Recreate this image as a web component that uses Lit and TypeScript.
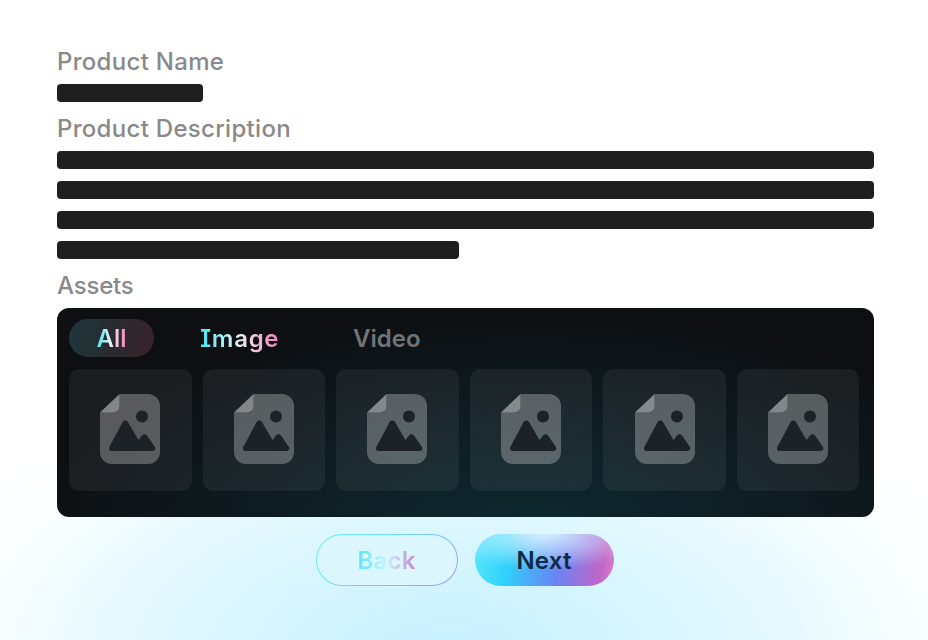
import { LitElement, html, css, svg } from "lit";
import { customElement } from "lit/decorators.js";

const icon = svg`<svg class="ico" viewBox="0 0 60 70" width="60" height="70">
  <path d="M19.500 0H48a12 12 0 0 1 12 12V58a12 12 0 0 1-12 12H12A12 12 0 0 1 0 58V18.500H14a5.500 5.500 0 0 0 5.500-5.500Z" fill="rgba(255,255,255,0.27)"/>
  <path d="M19.500 0V12.500a6 6 0 0 1-6 6H0Z" fill="rgba(255,255,255,0.46)"/>
  <circle cx="42" cy="22.500" r="6" fill="#1c2225"/>
  <path d="M22.800 27.800a3 3 0 0 1 5 0L38.500 46l3.500-4.500a3.200 3.200 0 0 1 5 0l7.800 11.300a2.600 2.600 0 0 1-2.100 4.200H11.500a2.600 2.600 0 0 1-2.200-4Z" fill="#1c2225"/>
</svg>`;

@customElement("app-root")
export class AppRoot extends LitElement {
  static styles = css`
    :host {
      display: block;
      width: 928px;
      height: 640px;
      overflow: hidden;
      font-family: "Inter", "Noto Sans", sans-serif;
      background:
        radial-gradient(ellipse 560px 300px at 450px 660px, #c6f1fe 0%, #d6f5fe 35%, #e6f9ff 60%, rgba(245, 253, 255, 0.8) 82%, rgba(255, 255, 255, 0) 100%),
        #fff;
    }
    .page {
      box-sizing: border-box;
      padding: 47px 54px 0 57px;
      display: flex;
      flex-direction: column;
    }
    .label {
      font-size: 24px;
      line-height: 30px;
      font-weight: 550;
      color: #898989;
      letter-spacing: 0.3px;
    }
    .bar {
      height: 18px;
      border-radius: 4px;
      background: #1f1f1f;
    }
    .name-bar { width: 146px; margin: 7px 0 12px; }
    .bars {
      display: flex;
      flex-direction: column;
      gap: 12px;
      margin: 7px 0 12px;
    }
    .short { width: 402px; }
    .assets { white-space: nowrap; letter-spacing: -0.2px; }
    .card {
      margin-top: 7px;
      height: 209px;
      box-sizing: border-box;
      border-radius: 12px;
      padding: 11px 14px 0 12px;
      background:
        radial-gradient(ellipse 500px 230px at 470px 225px, #0e2931 0%, rgba(15, 36, 43, 0.7) 45%, rgba(14, 18, 21, 0) 100%),
        #0d0f12;
    }
    .tabs {
      display: flex;
      align-items: center;
      height: 38px;
      font-size: 24px;
      font-weight: 600;
    }
    .tab { line-height: 36px; padding-top: 2px; }
    .all {
      width: 85px;
      text-align: center;
      border-radius: 19px;
      background: linear-gradient(100deg, #1d363c 0%, #2a2a2e 55%, #38222a 100%);
    }
    .grad {
      background: linear-gradient(90deg, #3fe6f6 0%, #eef3f6 50%, #f07fb8 100%);
      -webkit-background-clip: text;
      background-clip: text;
      color: transparent;
    }
    .image {
      margin-left: 46px;
      width: 79px;
      font-feature-settings: "cv08";
      letter-spacing: 0.7px;
      white-space: nowrap;
    }
    .video { margin-left: 74px; color: #717477; }
    .tiles {
      display: grid;
      grid-template-columns: repeat(6, 122.500px);
      gap: 11.100px;
      margin-top: 12px;
    }
    .tile {
      height: 122px;
      border-radius: 10px;
      background: rgba(255, 255, 255, 0.06);
      display: flex;
      align-items: center;
      justify-content: center;
      padding-bottom: 2px;
      box-sizing: border-box;
    }
    .ico { display: block; }
    .actions {
      display: flex;
      justify-content: center;
      gap: 17px;
      margin: 17px 0 0 -2px;
    }
    .btn {
      box-sizing: border-box;
      height: 52px;
      border-radius: 26px;
      display: flex;
      align-items: center;
      justify-content: center;
      font-size: 24px;
      font-weight: 600;
      letter-spacing: 0.2px;
    }
    .back {
      width: 142px;
      border: 1px solid transparent;
      background:
        linear-gradient(#dcf6fe, #dcf6fe) padding-box,
        linear-gradient(135deg, #6ff0fb 0%, #6fd8fb 45%, #a59ae6 100%) border-box;
    }
    .back span {
      background: linear-gradient(90deg, #4fe6fb 0%, #c8f2fc 50%, #c583cf 100%);
      -webkit-background-clip: text;
      background-clip: text;
      color: transparent;
    }
    .next {
      width: 139px;
      color: #0c2b44;
      background:
        radial-gradient(ellipse 100px 36px at 50% 0%, rgba(222, 244, 253, 0.95) 0%, rgba(222, 244, 253, 0) 100%),
        linear-gradient(100deg, #5be8fd 0%, #2fd2fb 25%, #6a83f6 60%, #c266c8 90%, #d988c8 100%);
    }
  `;

  render() {
    return html`<div class="page">
      <div class="label">Product Name</div>
      <div class="bar name-bar"></div>
      <div class="label">Product Description</div>
      <div class="bars">
        <div class="bar"></div>
        <div class="bar"></div>
        <div class="bar"></div>
        <div class="bar short"></div>
      </div>
      <div class="label assets">Assets</div>
      <div class="card">
        <div class="tabs">
          <div class="tab all"><span class="grad">All</span></div>
          <div class="tab image grad">Image</div>
          <div class="tab video">Video</div>
        </div>
        <div class="tiles">
          ${[0, 1, 2, 3, 4, 5].map(() => html`<div class="tile">${icon}</div>`)}
        </div>
      </div>
      <div class="actions">
        <div class="btn back"><span>Back</span></div>
        <div class="btn next">Next</div>
      </div>
    </div>`;
  }
}
